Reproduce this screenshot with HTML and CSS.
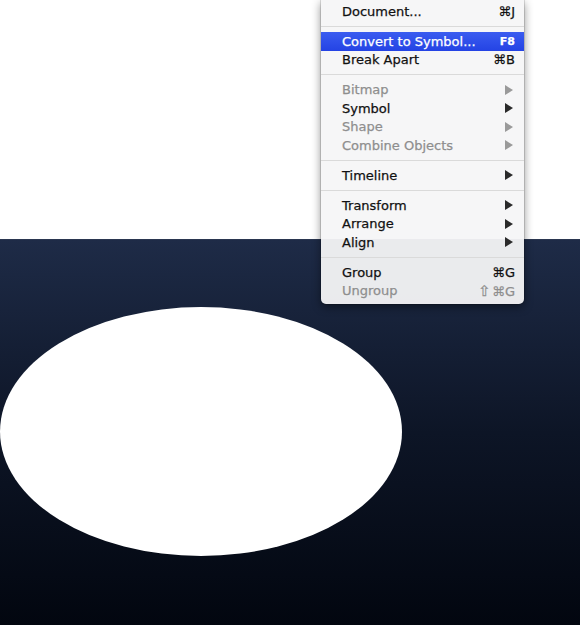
FILE: index.html
```html
<!DOCTYPE html>
<html lang="en">
  <head>
    <meta charset="UTF-8" />
    <meta name="viewport" content="width=device-width, initial-scale=1.0" />
    <title>Modify Menu</title>
    <link rel="stylesheet" href="styles.css">
  </head>
  <body>
    <div class="paper"></div>
    <div class="stage">
      <div class="oval"></div>
    </div>

    <div class="menu">
      <div class="menu-item"><span>Document...</span><span class="key">⌘J</span></div>
      <div class="menu-sep"></div>
      <div class="menu-item active"><span>Convert to Symbol...</span><span class="key fn">F8</span></div>
      <div class="menu-item"><span>Break Apart</span><span class="key">⌘B</span></div>
      <div class="menu-sep"></div>
      <div class="menu-item disabled"><span>Bitmap</span><span class="arrow"></span></div>
      <div class="menu-item"><span>Symbol</span><span class="arrow"></span></div>
      <div class="menu-item disabled"><span>Shape</span><span class="arrow"></span></div>
      <div class="menu-item disabled"><span>Combine Objects</span><span class="arrow"></span></div>
      <div class="menu-sep"></div>
      <div class="menu-item"><span>Timeline</span><span class="arrow"></span></div>
      <div class="menu-sep"></div>
      <div class="menu-item"><span>Transform</span><span class="arrow"></span></div>
      <div class="menu-item"><span>Arrange</span><span class="arrow"></span></div>
      <div class="menu-item"><span>Align</span><span class="arrow"></span></div>
      <div class="menu-sep"></div>
      <div class="menu-item"><span>Group</span><span class="key">⌘G</span></div>
      <div class="menu-item disabled"><span>Ungroup</span><span class="key"><span class="shift">⇧</span>⌘G</span></div>
    </div>
  </body>
</html>
```

FILE: styles.css
```css
body {
  margin: 0;
  width: 580px;
  height: 625px;
  overflow: hidden;
  position: relative;
  font-family: "DejaVu Sans", sans-serif;
  background: #fff;
}

.paper {
  height: 239px;
  background: #fff;
}

.stage {
  position: relative;
  height: 386px;
  background: linear-gradient(#1e2b47, #0d1526 50%, #02060f);
  border-top: 1px solid #2a3650;
}

.oval {
  position: absolute;
  left: 0;
  top: 67px;
  width: 402px;
  height: 249px;
  border-radius: 50%;
  background: #fff;
}

.menu {
  position: absolute;
  top: 0;
  left: 321px;
  width: 203px;
  padding: 2px 0 4px;
  background: rgba(246, 246, 247, 0.95);
  border-radius: 0 0 5px 5px;
  box-shadow: 0 3px 10px rgba(0, 0, 0, 0.45), 0 0 0 1px rgba(0, 0, 0, 0.12);
}

.menu-item {
  display: flex;
  align-items: center;
  justify-content: space-between;
  height: 18.5px;
  padding: 0 9px 0 21px;
  font-size: 13px;
  color: #111;
  -webkit-text-stroke: 0.25px currentColor;
}

.menu-item.disabled {
  color: #8e8e8e;
}

.menu-item.active {
  background: linear-gradient(#3a5cf0, #2443e4);
  color: #fff;
}

.key {
  font-size: 13px;
}

.key.fn {
  font-size: 11px;
  font-weight: bold;
}

.shift {
  font-size: 15px;
  margin-right: 1px;
}

.arrow {
  width: 0;
  height: 0;
  margin-right: 2px;
  border-top: 5px solid transparent;
  border-bottom: 5px solid transparent;
  border-left: 8px solid #2a2a2a;
}

.disabled .arrow {
  border-left-color: #9a9a9a;
}

.menu-sep {
  height: 1px;
  margin: 5px 0 5.5px;
  background: #dadada;
}
```
